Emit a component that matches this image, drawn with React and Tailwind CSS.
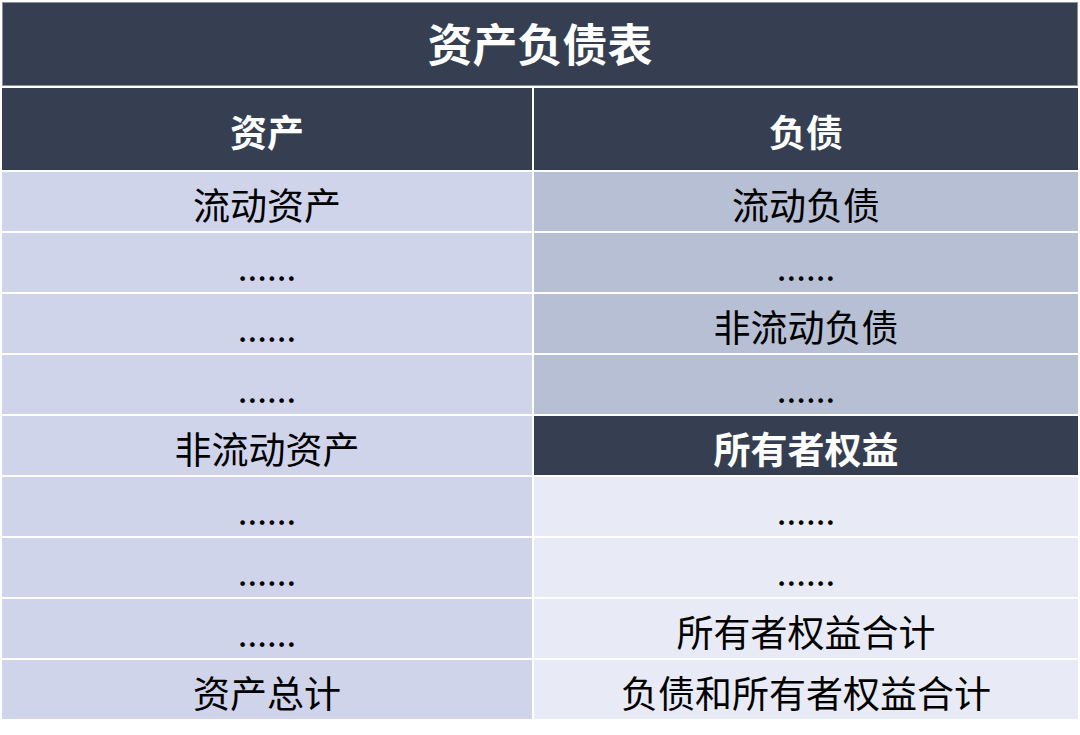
import React from 'react';

const rows = [
    { left: '流动资产', right: '流动负债', rightBg: 'bg-[#b6bfd3]' },
    { left: '......', right: '......', rightBg: 'bg-[#b6bfd3]' },
    { left: '......', right: '非流动负债', rightBg: 'bg-[#b6bfd3]' },
    { left: '......', right: '......', rightBg: 'bg-[#b6bfd3]' },
    { left: '非流动资产', right: '所有者权益', rightBg: 'bg-[#353f51]', dark: true },
    { left: '......', right: '......', rightBg: 'bg-[#e8ebf5]' },
    { left: '......', right: '......', rightBg: 'bg-[#e8ebf5]' },
    { left: '......', right: '所有者权益合计', rightBg: 'bg-[#e8ebf5]' },
    { left: '资产总计', right: '负债和所有者权益合计', rightBg: 'bg-[#e8ebf5]' },
];

const App = () => {
    return (
        <div
            className="w-[1080px] h-[735px] bg-white pt-[2px] pl-[2px]"
            style={{ fontFamily: '"Noto Sans CJK SC", "Noto Sans", sans-serif' }}
        >
            <div className="w-[1076px] flex flex-col gap-[2px]">
                <div className="h-[84px] bg-[#353f51] border border-[#8a909c] flex items-center justify-center text-white font-bold text-[45px] pb-[2px]">
                    资产负债表
                </div>
                <div className="grid grid-cols-[530px_544px] gap-[2px]">
                    <div className="h-[82px] bg-[#353f51] flex items-center justify-center text-white font-bold text-[37px] leading-none pt-[4px]">
                        资产
                    </div>
                    <div className="h-[82px] bg-[#353f51] flex items-center justify-center text-white font-bold text-[37px] leading-none pt-[4px]">
                        负债
                    </div>
                    {rows.map((row, i) => (
                        <React.Fragment key={i}>
                            <div className={`h-[59px] bg-[#d0d4ea] flex items-center justify-center text-black leading-none pt-[6px] ${row.left === '......' ? 'text-[35px]' : 'text-[37px]'}`}>
                                {row.left}
                            </div>
                            <div
                                className={`h-[59px] ${row.rightBg} flex items-center justify-center leading-none pt-[6px] ${row.right === '......' ? 'text-[35px]' : 'text-[37px]'} ${row.dark ? 'text-white font-bold' : 'text-black'}`}
                            >
                                {row.right}
                            </div>
                        </React.Fragment>
                    ))}
                </div>
            </div>
        </div>
    );
};

export default App;
